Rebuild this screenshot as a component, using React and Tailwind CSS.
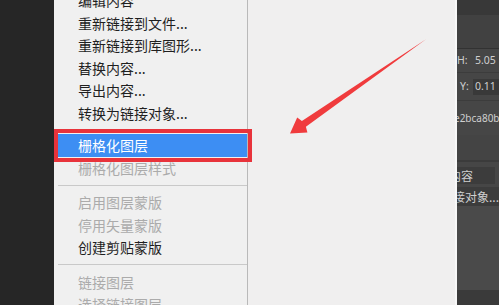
import React from 'react'

const CJK = { fontFamily: '"Noto Sans CJK SC", "Noto Sans", sans-serif' }

// menu rows, top one is cut off by the window edge
const ROWS = [
  { label: '编辑内容' },
  { label: '重新链接到文件...' },
  { label: '重新链接到库图形...' },
  { label: '替换内容...' },
  { label: '导出内容...' },
  { label: '转换为链接对象...' },
  { sep: 10 },
  { label: '栅格化图层', active: true },
  { label: '栅格化图层样式', disabled: true },
  { sep: 12 },
  { label: '启用图层蒙版', disabled: true },
  { label: '停用矢量蒙版', disabled: true },
  { label: '创建剪贴蒙版' },
  { sep: 12 },
  { label: '链接图层', disabled: true },
  { label: '选择链接图层', disabled: true },
]

function MenuRow({ row }) {
  if (row.sep) {
    return (
      <div className={`shrink-0 flex items-center pl-[4px] ${row.sep === 10 ? 'h-[10px]' : 'h-[12px]'}`}>
        <div className="h-px w-full bg-[#c9c9c9]" />
      </div>
    )
  }
  const color = row.active
    ? 'bg-[#3d8ef3] text-white mr-[0.5px]'
    : row.disabled ? 'text-[#ababab]' : 'text-[#1f1f1f]'
  return (
    <div className={`h-[22.5px] shrink-0 flex items-center pl-[24px] text-[14px] leading-none whitespace-nowrap ${color}`}>
      {row.label}
    </div>
  )
}

function Arrow() {
  return (
    <svg className="absolute left-0 top-0 pointer-events-none" width="499" height="305" viewBox="0 0 499 305">
      <polygon
        fill="#f03b3d"
        points="290,133.5 297.2,117.6 301.9,121 426,39.3 305.9,126.8 307.4,132.4"
      />
    </svg>
  )
}

function PropsPanel() {
  return (
    <div className="w-[42px] shrink-0 flex flex-col bg-[#464646] text-[10.5px] text-[#cfcfcf] overflow-hidden"
      style={{ fontFamily: '"Noto Sans", sans-serif' }}>
      <div className="h-[15px] shrink-0 bg-[#383838]" />
      <div className="h-[33px] shrink-0 bg-[#414141]" />
      <div className="h-px shrink-0 bg-[#323232]" />
      <div className="h-[23px] shrink-0 flex items-center whitespace-nowrap">
        <span className="w-[18px]">H:</span><span>5.05</span>
      </div>
      <div className="h-px shrink-0 bg-[#3c3c3c]" />
      <div className="h-[27px] shrink-0 flex items-center whitespace-nowrap">
        <span className="w-[16px] pl-[3px]">Y:</span>
        <span className="flex-1 h-[16px] flex items-center pl-[2px] bg-[#393939]">0.11</span>
      </div>
      <div className="h-px shrink-0 bg-[#3c3c3c]" />
      <div className="h-[34px] shrink-0 flex items-center whitespace-nowrap">
        <span className="-ml-[3px] text-[10px]">e2bca80b</span>
      </div>
      <div className="h-[25px] shrink-0 bg-[#444444]" />
      <div className="h-[2px] shrink-0 bg-[#3b3b3b]" />
      <div className="h-[5px] shrink-0" />
      <div className="h-[17px] shrink-0 mr-[4px] flex items-center whitespace-nowrap bg-[#3c3c3c]" style={CJK}>
        <span className="-ml-[8px] text-[12px]">内容</span>
      </div>
      <div className="h-[3px] shrink-0" />
      <div className="h-[19px] shrink-0 flex items-center whitespace-nowrap bg-[#3c3c3c]" style={CJK}>
        <span className="-ml-[4px] text-[12px]">接对象...</span>
      </div>
      <div className="flex-1 bg-[#4a4a4a]" />
      <div className="h-[15px] shrink-0 bg-[#3a3a3a]" />
    </div>
  )
}

export default function App() {
  return (
    <div className="relative w-[499px] h-[305px] overflow-hidden flex items-start bg-[#f0efef]" style={CJK}>
      {/* dark tool strip */}
      <div className="w-[54px] h-[305px] shrink-0 bg-[#262626]" />

      {/* context menu */}
      <div className="w-[194px] h-[316px] shrink-0 flex flex-col -mt-[11px] bg-[#f0f0f0] border-r border-[#b9b9b9]">
        {ROWS.map((r, i) => <MenuRow key={i} row={r} />)}
      </div>

      {/* canvas behind the menu */}
      <div className="flex-1 h-[305px] bg-[#f0efef]" />
      <div className="w-[2px] h-[305px] shrink-0 bg-[#f8f8f8]" />

      <div className="h-[305px] flex">
        <PropsPanel />
      </div>

      {/* annotation: red frame + arrow */}
      <div className="absolute left-[54px] top-[129px] w-[198px] h-[33px] border-[4px] border-[#e8333b]" />
      <Arrow />
    </div>
  )
}
